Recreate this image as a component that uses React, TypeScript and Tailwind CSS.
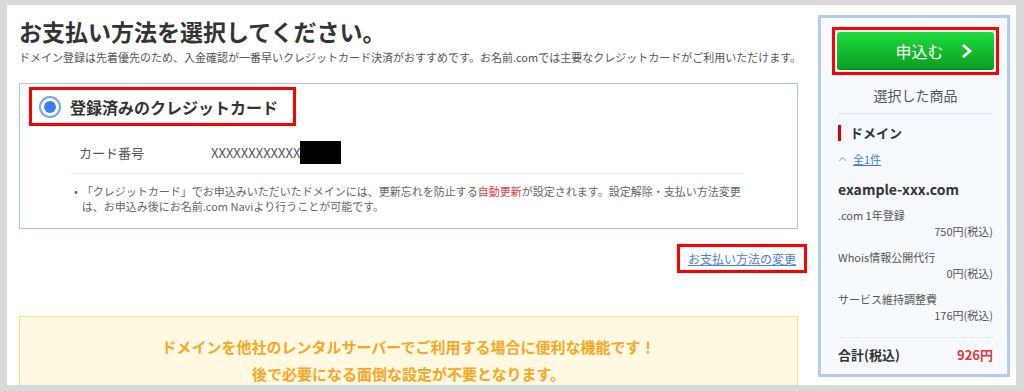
const font = { fontFamily: '"Noto Sans CJK JP", "Noto Sans", sans-serif' };

const LINE_ITEMS = [
  { name: '.com 1年登録', price: '750円(税込)' },
  { name: 'Whois情報公開代行', price: '0円(税込)' },
  { name: 'サービス維持調整費', price: '176円(税込)' },
];

function Sidebar() {
  return (
    <aside className="mt-[10px] mb-[8px] w-[192px] shrink-0 border-[3px] border-[#b3cbef] bg-[#f6f9fe] pl-[17px] pr-[14px] pt-[9px]">
      {/* 申込むボタン */}
      <div className="mx-[-6px] border-[3px] border-[#ff0000] p-[2px]">
        <button className="flex h-[38px] w-full items-center justify-center gap-[16px] rounded-[3px] bg-gradient-to-b from-[#1fdc3e] to-[#0a9c1f] pl-[38px] text-[16px] text-white shadow-[inset_0_-1px_0_rgba(0,0,0,0.15)]">
          <span>申込む</span>
          <svg width="14" height="16" viewBox="0 0 14 16" fill="none">
            <path d="M3 2l7 6-7 6" stroke="white" strokeWidth="2.8" />
          </svg>
        </button>
      </div>

      <div className="border-b border-[#e2e6ec] pt-[10px] pb-[7px] text-center text-[14px] text-[#555]">選択した商品</div>

      <div className="mt-[9px] flex items-center gap-[9px]">
        <span className="h-[16px] w-[3px] bg-[#d40000]" />
        <span className="text-[13px] font-bold text-[#333]">ドメイン</span>
      </div>

      <div className="mt-[8px] flex items-center gap-[6px] text-[11px]">
        <svg width="9" height="6" viewBox="0 0 9 6" fill="none">
          <path d="M1 5l3.5-3.5L8 5" stroke="#b5b5b5" strokeWidth="1.2" />
        </svg>
        <span className="text-[#3b7bd9] underline">全1件</span>
      </div>

      <div className="mt-[12px] text-[14px] font-bold text-[#333]">example-xxx.com</div>

      <div className="mt-[7px] flex flex-col gap-[10px] text-[11px] text-[#555]">
        {LINE_ITEMS.map((it) => (
          <div key={it.name} className="flex flex-col leading-[16px]">
            <span>{it.name}</span>
            <span className="text-right">{it.price}</span>
          </div>
        ))}
      </div>

      <div className="mt-[14px] flex items-center justify-between border-t border-dotted border-[#d5dae2] pt-[7px] text-[13px] font-bold">
        <span className="text-[#333]">合計(税込)</span>
        <span className="text-[#e03a3a]">926円</span>
      </div>
    </aside>
  );
}

export default function App() {
  return (
    <div className="h-[391px] w-[1024px] overflow-hidden bg-[#d9d9d9] pt-[5px] pl-[7px] pr-[8px]" style={font}>
      <div className="flex h-[380px] gap-[6px] overflow-hidden bg-white pr-[3px]">
        {/* メイン */}
        <main className="flex w-[805px] shrink-0 flex-col pl-[12px] pt-[11px]">
          <h1 className="text-[23px] font-bold leading-[30px] text-[#333]">お支払い方法を選択してください。</h1>
          <p className="mt-[3px] text-[11px] leading-[16px] text-[#555]">
            ドメイン登録は先着優先のため、入金確認が一番早いクレジットカード決済がおすすめです。お名前.comでは主要なクレジットカードがご利用いただけます。
          </p>

          <section className="mt-[18px] w-[779px] border-[1.5px] border-[#a9c6f2] pl-[9px] pt-[3px] pb-[14px]">
            <div className="inline-flex h-[39px] w-[267px] items-center gap-[9px] border-[3px] border-[#ff0000] pl-[7px]">
              <span className="flex h-[22px] w-[22px] items-center justify-center rounded-full border-[2px] border-[#7aa5e6] bg-white">
                <span className="h-[12px] w-[12px] rounded-full bg-[#3d80ea]" />
              </span>
              <span className="text-[16px] font-bold text-[#333]">登録済みのクレジットカード</span>
            </div>

            <div className="ml-[42px] mr-[54px] mt-[14px] flex h-[34px] items-center border-b border-[#eeeeee] pb-[8px] pl-[8px] text-[13px] text-[#555]">
              <span className="w-[132px]">カード番号</span>
              <span className="flex items-center">
                XXXXXXXXXXXX
                <span className="h-[23px] w-[41px] bg-black" />
              </span>
            </div>

            <div className="ml-[45px] mt-[10px] flex gap-[4px] pr-[40px] text-[11px] leading-[15px] text-[#666]">
              <span>•</span>
              <p>
                「クレジットカード」でお申込みいただいたドメインには、更新忘れを防止する
                <span className="text-[#e03a4a]">自動更新</span>
                が設定されます。設定解除・支払い方法変更は、お申込み後にお名前.com Naviより行うことが可能です。
              </p>
            </div>
          </section>

          <div className="mt-[15px] flex w-[788px] justify-end">
            <div className="flex h-[29px] items-center border-[3px] border-[#ff0000] px-[8px]">
              <a className="text-[12px] text-[#4a80d8] underline">お支払い方法の変更</a>
            </div>
          </div>

          <div className="mt-[43px] w-[779px] border border-[#f8e08e] bg-[#fff9e2] pt-[16px] text-center text-[15px] font-bold leading-[27px] text-[#f5a623]">
            <p>ドメインを他社のレンタルサーバーでご利用する場合に便利な機能です！</p>
            <p>後で必要になる面倒な設定が不要となります。</p>
          </div>
        </main>

        <Sidebar />
      </div>
    </div>
  );
}
